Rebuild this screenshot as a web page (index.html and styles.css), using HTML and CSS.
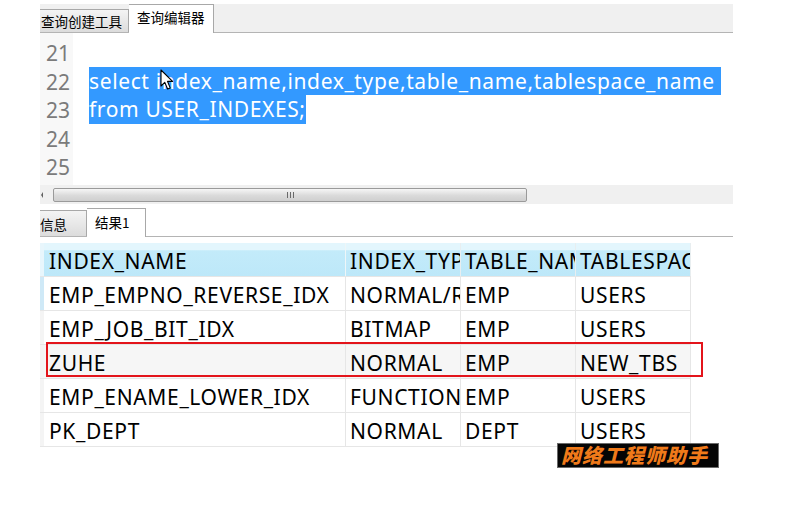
FILE: index.html
```html
<!DOCTYPE html>
<html>
<head>
<meta charset="utf-8">
<link rel="stylesheet" href="styles.css">
</head>
<body>
<div class="app">
  <div class="tabbar">
    <div class="tab tab-first">查询创建工具</div>
    <div class="tab tab-active">查询编辑器</div>
    <div class="tab-fill"></div>
  </div>
  <div class="editor">
    <div class="gutter">
      <div class="ln">21</div>
      <div class="ln">22</div>
      <div class="ln">23</div>
      <div class="ln">24</div>
      <div class="ln">25</div>
    </div>
    <div class="code">
      <div class="cl"></div>
      <div class="cl"><span class="sel">select index_name,index_type,table_name,tablespace_name </span></div>
      <div class="cl"><span class="sel">from USER_INDEXES;</span></div>
      <div class="cl"></div>
      <div class="cl"></div>
      <svg class="cursor" width="14" height="22" viewBox="0 0 14 22"><path d="M1 1 L1 17 L4.8 13.4 L7.6 20 L10.2 18.9 L7.5 12.4 L12.6 12.4 Z" fill="#fff" stroke="#000" stroke-width="1.1" stroke-linejoin="round"/></svg>
    </div>
  </div>
  <div class="hscroll">
    <div class="arrow-left"></div>
    <div class="thumb"><span class="grip"></span></div>
  </div>
  <div class="rtabbar">
    <div class="tab rtab">信息</div>
    <div class="tab rtab-active">结果1</div>
    <div class="tab-fill"></div>
  </div>
  <div class="gridwrap">
    <div class="rowhead-col">
      <div class="rh rh-h"></div>
      <div class="rh rh-sel"></div>
      <div class="rh"></div>
      <div class="rh"></div>
      <div class="rh"></div>
      <div class="rh"></div>
    </div>
    <div class="grid">
      <div class="row head"><div class="c c1">INDEX_NAME</div><div class="c">INDEX_TYPE</div><div class="c">TABLE_NAME</div><div class="c">TABLESPACE_NAME</div></div>
      <div class="row"><div class="c c1">EMP_EMPNO_REVERSE_IDX</div><div class="c">NORMAL/REV</div><div class="c">EMP</div><div class="c">USERS</div></div>
      <div class="row"><div class="c c1">EMP_JOB_BIT_IDX</div><div class="c">BITMAP</div><div class="c">EMP</div><div class="c">USERS</div></div>
      <div class="row alt"><div class="c c1">ZUHE</div><div class="c">NORMAL</div><div class="c">EMP</div><div class="c">NEW_TBS</div></div>
      <div class="row"><div class="c c1">EMP_ENAME_LOWER_IDX</div><div class="c">FUNCTION-BASED</div><div class="c">EMP</div><div class="c">USERS</div></div>
      <div class="row"><div class="c c1">PK_DEPT</div><div class="c">NORMAL</div><div class="c">DEPT</div><div class="c">USERS</div></div>
    </div>
    <div class="redbox"></div>
  </div>
  <div class="watermark">网络工程师助手</div>
</div>
</body>
</html>
```
FILE: styles.css
```css
html, body {
  margin: 0;
  padding: 0;
  background: #ffffff;
  min-height: 516px;
}
.app {
  margin-left: 40px;
  width: 693px;
  padding-top: 4px;
  padding-bottom: 60px;
  position: relative;
  font-family: "Noto Sans", "Noto Sans CJK SC", sans-serif;
}
.tabbar {
  height: 28px;
  background: #f0f0f0;
  display: flex;
  align-items: flex-end;
  border-bottom: 1px solid #b4b4b4;
}
.tab {
  box-sizing: border-box;
  font-family: "Noto Sans CJK SC", sans-serif;
  font-size: 13.5px;
  color: #000;
  white-space: nowrap;
}
.tab-first {
  width: 89px;
  height: 23px;
  line-height: 22px;
  padding-left: 1px;
  background: linear-gradient(#f4f4f4, #dcdcdc);
  border: 1px solid #a8a8a8;
  border-left: none;
  border-bottom: none;
  overflow: hidden;
}
.tab-active {
  width: 85px;
  height: 29px;
  margin-bottom: -1px;
  line-height: 24px;
  padding-left: 8px;
  background: #ffffff;
  border: 1px solid #a8a8a8;
  border-bottom: none;
  border-left: none;
}
.tab-fill { flex: 1; }
.editor {
  height: 152px;
  display: flex;
  background: #ffffff;
  position: relative;
}
.gutter {
  width: 33px;
  background: #f8f8f8;
  padding-top: 6px;
  box-sizing: border-box;
}
.ln {
  height: 28.5px;
  line-height: 28.5px;
  font-size: 21px;
  color: #7b7b7b;
  padding-left: 6px;
}
.code {
  flex: 1;
  padding-top: 5px;
  padding-left: 16px;
  position: relative;
}
.cl {
  height: 28.5px;
  line-height: 28.5px;
  font-size: 21px;
  letter-spacing: 0.62px;
  white-space: pre;
  color: #000;
}
.sel {
  background: #3399ff;
  color: #ffffff;
  display: inline-block;
  height: 28.5px;
}
.cursor {
  position: absolute;
  left: 87px;
  top: 36px;
}
.hscroll {
  height: 19px;
  background: #f0f0f0;
  display: flex;
  align-items: center;
  box-sizing: border-box;
  padding-top: 1px;
}
.arrow-left {
  width: 0;
  height: 0;
  margin-left: 1px;
  margin-right: 10px;
  border-top: 3px solid transparent;
  border-bottom: 3px solid transparent;
  border-right: 2px solid #606060;
}
.thumb {
  width: 474px;
  height: 14px;
  box-sizing: border-box;
  border: 1px solid #9a9a9a;
  border-radius: 2px;
  background: linear-gradient(#f6f6f6, #dadada 55%, #cfcfcf);
  display: flex;
  justify-content: center;
  align-items: center;
}
.grip {
  width: 7px;
  height: 6px;
  background: repeating-linear-gradient(90deg, #6a6a6a 0 1px, transparent 1px 3px);
}
.rtabbar {
  height: 32px;
  display: flex;
  align-items: flex-end;
  border-bottom: 1px solid #b4b4b4;
  background: #ffffff;
}
.rtab {
  width: 47px;
  height: 26px;
  line-height: 26px;
  background: linear-gradient(#f4f4f4, #dcdcdc);
  border: 1px solid #a8a8a8;
  border-left: none;
  border-bottom: none;
  padding-left: 0;
}
.rtab-active {
  width: 59px;
  height: 29px;
  margin-bottom: -1px;
  line-height: 26px;
  padding-left: 8px;
  background: #ffffff;
  border: 1px solid #a8a8a8;
  border-left: none;
  border-bottom: none;
}
.gridwrap {
  margin-top: 6px;
  display: flex;
  position: relative;
}
.rowhead-col {
  width: 4px;
  display: flex;
  flex-direction: column;
}
.rh {
  height: 34px;
  background: #f4f4f4;
  border-bottom: 1px solid #e6e6e6;
  box-sizing: border-box;
}
.rh-h { background: #e8f6fc; }
.rh-sel { background: #cfe9f7; }
.grid {
  display: flex;
  flex-direction: column;
}
.row {
  display: flex;
  height: 34px;
  box-sizing: border-box;
  border-bottom: 1px solid #e6e6e6;
  background: #ffffff;
}
.row.alt { background: #f6f6f6; }
.row.head {
  background: linear-gradient(#e3f6fd 0, #e3f6fd 22%, #c3ebfa 23%, #bde8f9 100%);
  border-bottom: 1px solid #e6e6e6;
}
.c {
  width: 115px;
  height: 33px;
  box-sizing: border-box;
  padding-left: 4px;
  padding-top: 4px;
  border-right: 1px solid #e6e6e6;
  font-size: 21px;
  letter-spacing: 0.65px;
  line-height: 29px;
  color: #000;
  white-space: nowrap;
  overflow: hidden;
}
.c1 { width: 302px; padding-left: 5px; }
.head .c { border-right: 1px solid #e8eef0; }
.head .c1 { border-right: 1px solid #eef6f8; }
.redbox {
  position: absolute;
  left: 6px;
  top: 99px;
  width: 657px;
  height: 35px;
  box-sizing: border-box;
  border: 2px solid #e3141b;
}
.watermark {
  position: absolute;
  z-index: 5;
  left: 517px;
  top: 443px;
  width: 162px;
  height: 25px;
  box-sizing: border-box;
  background: #050505;
  border: 1px solid #6a6a6a;
  font-family: "Noto Sans CJK SC", sans-serif;
  font-weight: 900;
  font-style: italic;
  font-size: 20px;
  line-height: 22px;
  letter-spacing: 1px;
  padding-left: 3px;
  color: #f07a1a;
  white-space: nowrap;
}
```
